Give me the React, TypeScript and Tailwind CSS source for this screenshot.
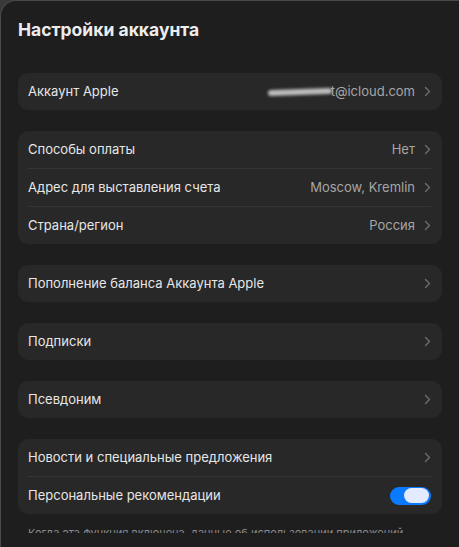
import React from "react";

const Chevron = () => (
  <svg width="7" height="11" viewBox="0 0 7 11" fill="none" className="shrink-0 ml-[9px]" aria-hidden>
    <path d="M1.5 1.5L5.5 5.5L1.5 9.5" stroke="#6c6c6c" strokeWidth="1.4" strokeLinecap="round" strokeLinejoin="round" />
  </svg>
);

type Row = { label: string; value?: React.ReactNode; toggle?: boolean };

const Toggle = () => (
  <div className="w-[41px] h-[18px] rounded-full bg-[#0a7aff] flex items-center justify-end pr-[2px]">
    <div className="w-[25px] h-[15px] rounded-full bg-[#e4eaff]" />
  </div>
);

const Card = ({ rows }: { rows: Row[] }) => (
  <div className="bg-[#282828] rounded-[10px] pl-[10px] pr-[11px]">
    {rows.map((r, i) => (
      <div
        key={r.label}
        className={`flex items-center justify-between ${i > 0 ? "h-[38px] border-t border-[#363636]" : "h-[37px]"}`}
      >
        <span className="text-[#e6e6e6]">{r.label}</span>
        {r.toggle ? (
          <Toggle />
        ) : (
          <div className="flex items-center text-[#a6a6a6]">
            {r.value}
            <Chevron />
          </div>
        )}
      </div>
    ))}
  </div>
);

const Email = () => (
  <span className="flex items-center">
    <span className="w-[64px] h-[6px] rounded-full bg-[#bdbdbd] blur-[1.5px] mr-[-1px] -rotate-2" />
    <span>t@icloud.com</span>
  </span>
);

export default function App() {
  return (
    <div className="w-[459px] h-[547px] bg-[#3a3a3a] overflow-hidden" style={{ fontFamily: "Inter, 'Noto Sans', sans-serif" }}>
      <div className="h-full bg-[#1e1e1e] rounded-tl-[16px] border-t border-l border-[#4a4a4a] pl-[17px] pr-[17px] text-[13px]">
        <h1 className="text-[17.5px] font-bold text-[#ececec] pt-[17px] leading-[24px]">Настройки аккаунта</h1>
        <div className="flex flex-col gap-[21px] mt-[31px]">
          <Card rows={[{ label: "Аккаунт Apple", value: <Email /> }]} />
          <Card
            rows={[
              { label: "Способы оплаты", value: "Нет" },
              { label: "Адрес для выставления счета", value: "Moscow, Kremlin" },
              { label: "Страна/регион", value: "Россия" },
            ]}
          />
          <Card rows={[{ label: "Пополнение баланса Аккаунта Apple" }]} />
          <Card rows={[{ label: "Подписки" }]} />
          <Card rows={[{ label: "Псевдоним" }]} />
          <Card
            rows={[
              { label: "Новости и специальные предложения" },
              { label: "Персональные рекомендации", toggle: true },
            ]}
          />
        </div>
        <div className="h-[7px] overflow-hidden mt-[12px] px-[10px]">
          <p className="text-[11px] leading-[14px] text-[#8a8a8a]">
            Когда эта функция включена, данные об использовании приложений
          </p>
        </div>
      </div>
    </div>
  );
}
